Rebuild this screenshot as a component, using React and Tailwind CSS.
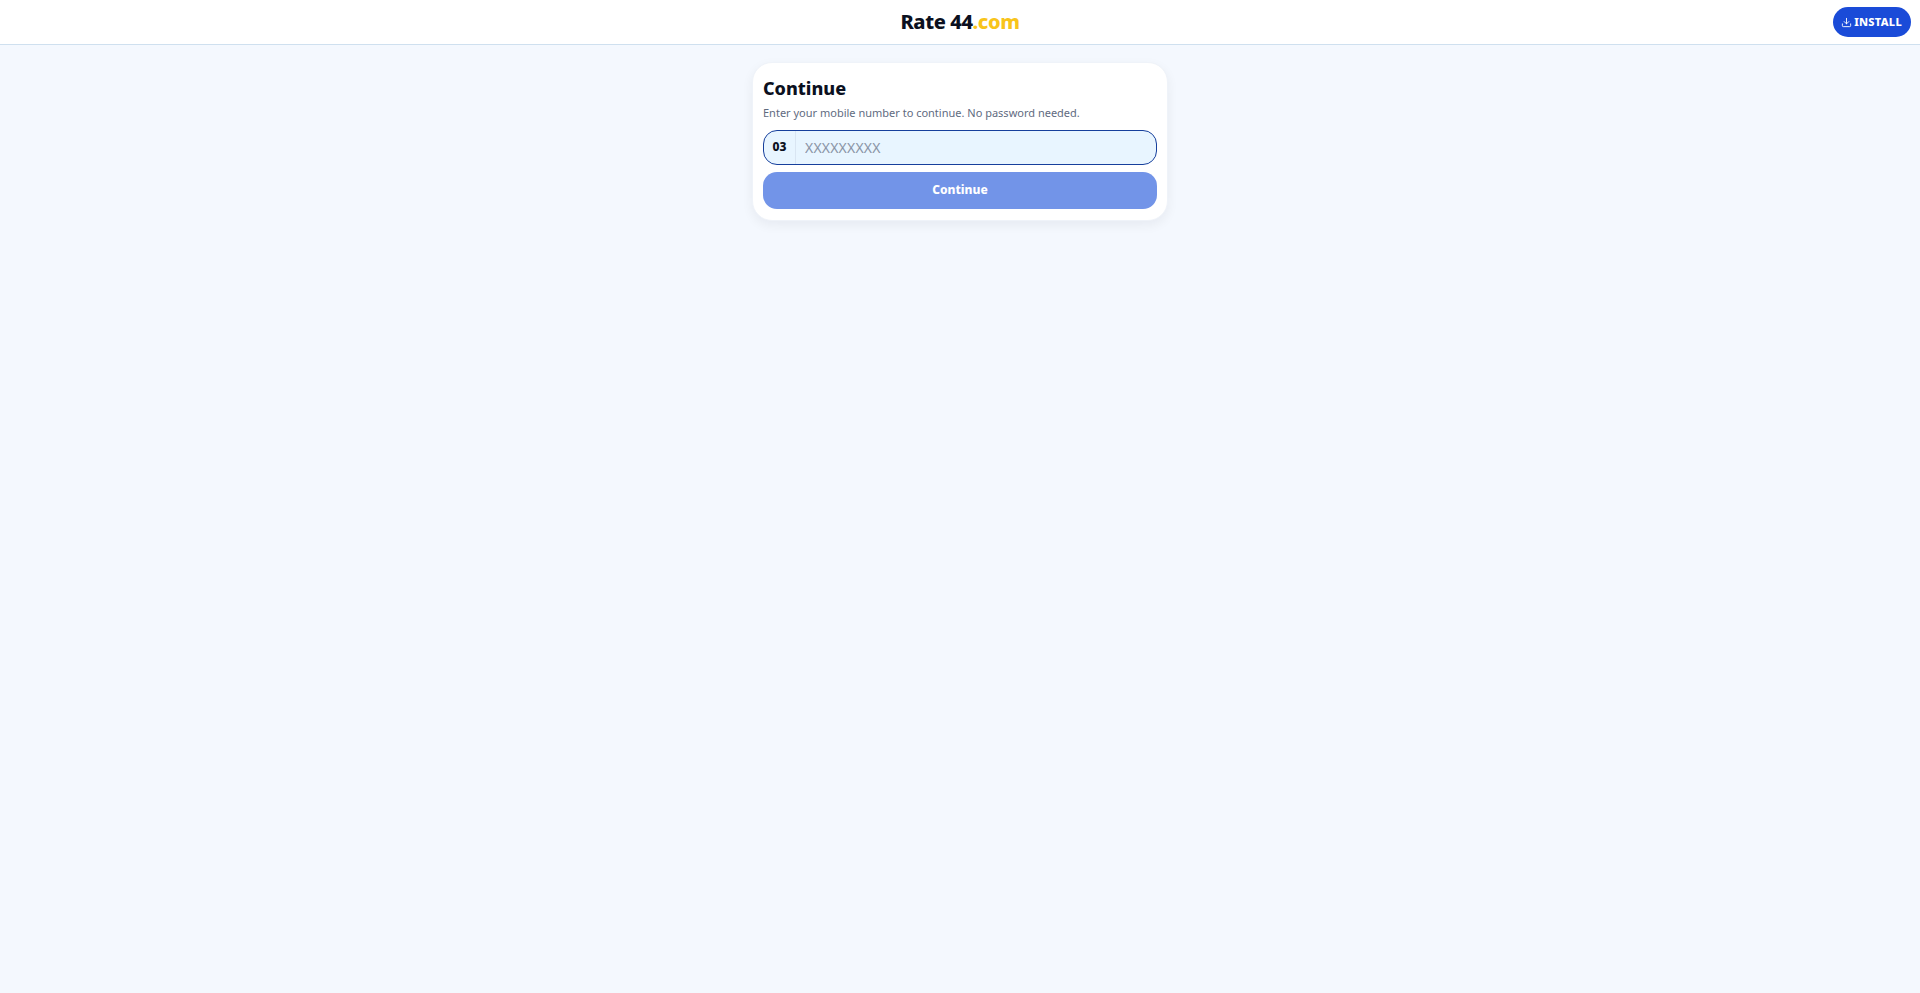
import React from 'react'
import { Download } from 'lucide-react'

export default function App() {
  return (
    <div className="min-h-[993px] bg-[#f4f8fe] font-['Noto_Sans',sans-serif] text-[#0b1020]">
      {/* Header */}
      <header className="relative flex h-[45px] items-center justify-center border-b border-[#cfe0ef] bg-white">
        <div className="text-[20px] leading-none font-extrabold tracking-[-0.4px]">
          Rate 44<span className="text-[#f8c41b]">.com</span>
        </div>
        <button
          type="button"
          className="absolute top-[7px] right-[9px] flex h-[30px] items-center gap-[2px] rounded-full bg-[#1a4bd8] pr-[9px] pl-[8px] text-[11px] font-extrabold tracking-[0.3px] text-white"
        >
          <Download size={11} />
          INSTALL
        </button>
      </header>

      {/* Card */}
      <main className="flex justify-center pt-[17px]">
        <div className="w-[416px] rounded-[20px] border border-[#eff3f9] bg-white px-[10px] pt-[10px] pb-[11px] shadow-[0_4px_12px_rgba(15,23,42,0.06)]">
          <h1 className="mt-[1px] text-[18px] leading-[28px] font-extrabold">Continue</h1>
          <p className="mt-[3px] text-[11px] leading-[16px] text-[#5f6b7f]">
            Enter your mobile number to continue. No password needed.
          </p>
          <div className="mt-[9px] flex h-[35px] overflow-hidden rounded-[14px] border border-[#163f9c] bg-[#e8f5ff]">
            <span className="flex w-[32px] items-center justify-center border-r border-[#d9e5f2] pb-[1px] text-[12px] font-extrabold">
              03
            </span>
            <input
              placeholder="XXXXXXXXX"
              className="min-w-0 flex-1 bg-transparent pr-2 pl-[9px] text-[14px] tracking-[0.2px] outline-none placeholder:text-[#8a94a6]"
            />
          </div>
          <button
            type="button"
            className="mt-[7px] h-[37px] w-full rounded-[14px] bg-[#7294e8] pb-[1px] text-[12px] font-extrabold text-white"
          >
            Continue
          </button>
        </div>
      </main>
    </div>
  )
}
